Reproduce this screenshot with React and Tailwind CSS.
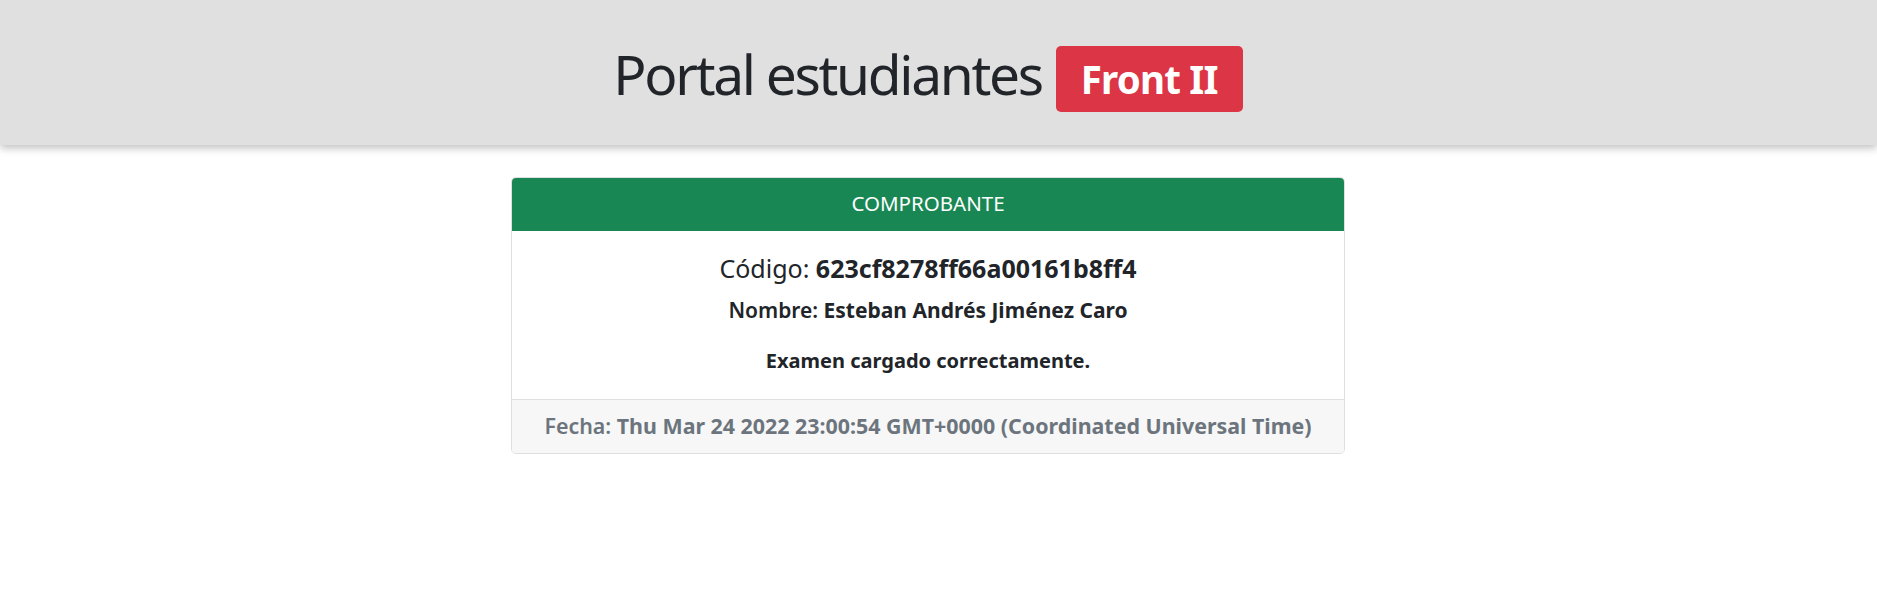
export default function App() {
  return (
    <div className="min-h-[602px] bg-white text-[#212529]" style={{ fontFamily: '"Noto Sans", "Open Sans", sans-serif' }}>
      <header className="relative z-10 h-[145px] bg-[#e0e0e0] shadow-[0_3px_8px_rgba(0,0,0,0.25)]">
        <div className="flex items-start justify-center pt-[40px] pr-[21px]">
          <h1 className="text-[55px] font-normal leading-[68px] tracking-[-2.3px]">Portal estudiantes</h1>
          <span className="ml-[14px] mt-[6px] rounded-[5px] bg-[#dc3545] px-[25px] py-[13px] text-[38.5px] font-bold leading-[40px] tracking-[-0.8px] text-white">
            Front II
          </span>
        </div>
      </header>

      <main className="pt-[32px] pr-[21px]">
        <div className="mx-auto w-[834px] overflow-hidden rounded-[5px] border border-[#dfdfdf] text-center">
          <div className="bg-[#198754] pt-[10px] pb-[13px] text-[20.5px] leading-[30px] text-white">COMPROBANTE</div>

          <div className="flex flex-col items-center pt-[21px] pb-[24px]">
            <p className="text-[25px] leading-[32px]">
              Código: <span className="font-bold">623cf8278ff66a00161b8ff4</span>
            </p>
            <p className="mt-[12px] text-[21px] font-semibold leading-[28px]">
              Nombre: <span className="font-bold">Esteban Andrés Jiménez Caro</span>
            </p>
            <p className="mt-[23px] text-[20px] font-bold leading-[28px]">Examen cargado correctamente.</p>
          </div>

          <div className="border-t border-[#dfdfdf] bg-[#f7f7f7] pt-[12px] pb-[13px] text-[21.4px] font-bold leading-[28px] text-[#6c757d]">
            <span className="font-semibold">Fecha:</span> Thu Mar 24 2022 23:00:54 GMT+0000 (Coordinated Universal Time)
          </div>
        </div>
      </main>
    </div>
  )
}
